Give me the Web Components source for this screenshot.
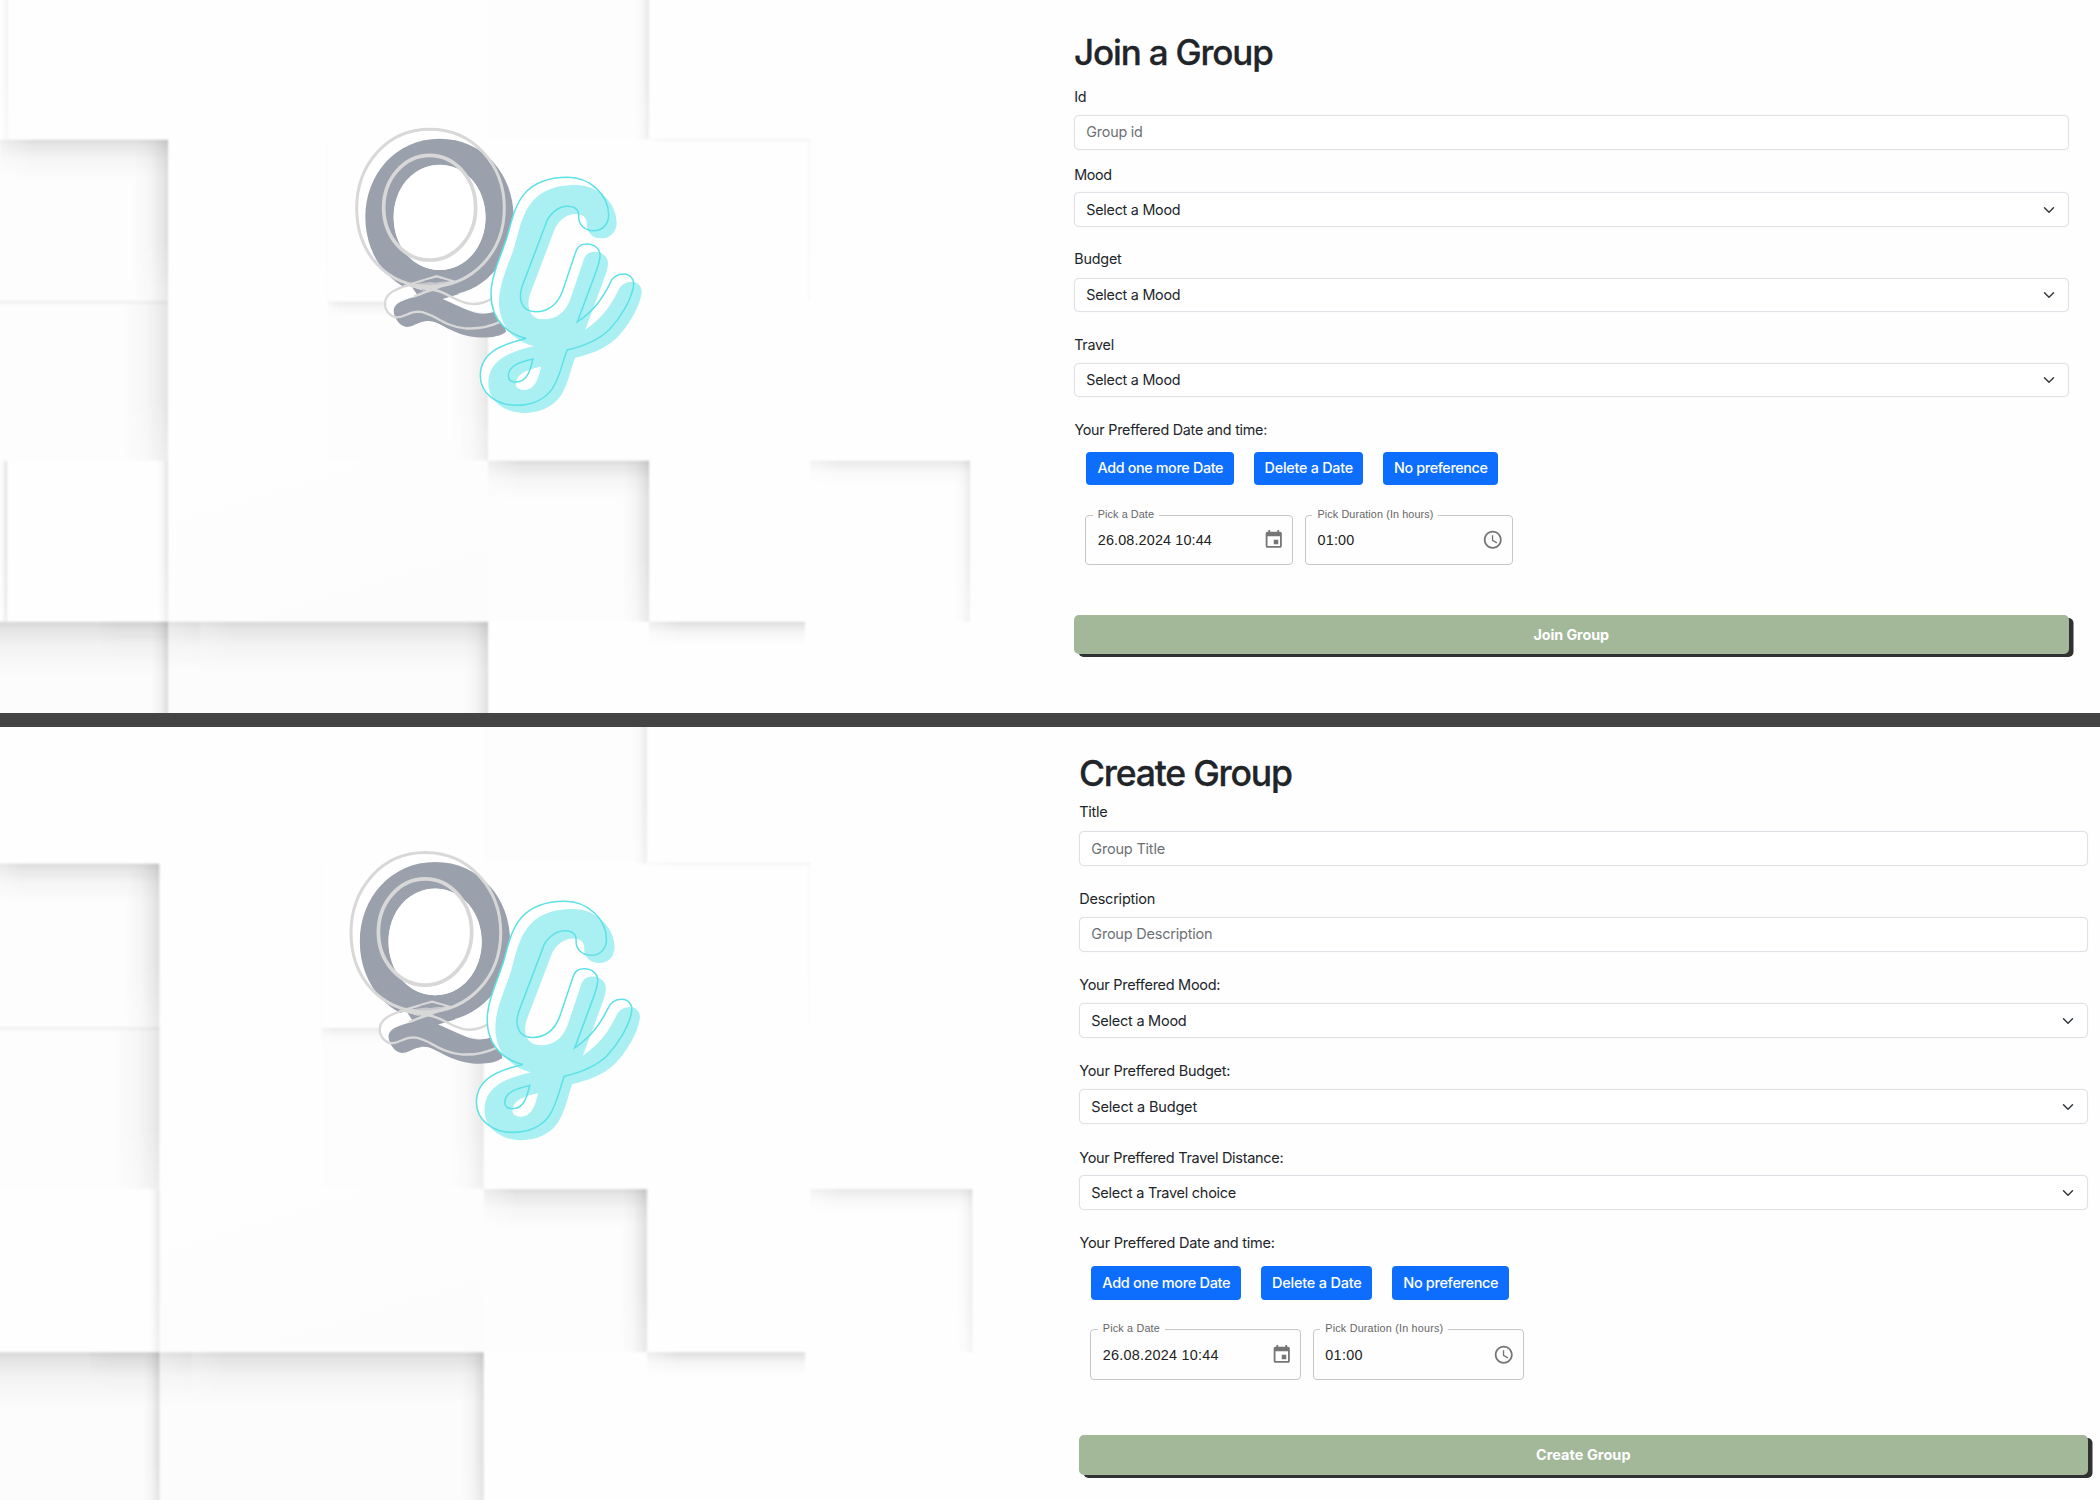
<!DOCTYPE html>
<html lang="en">
<head>
<meta charset="utf-8">
<title>Groups</title>
<style>
html,body{margin:0;padding:0}
body{width:2100px;height:1500px;overflow:hidden;background:#444;display:flex;flex-direction:column;gap:14px;font-family:Inter,"Liberation Sans",sans-serif;color:#212529}
</style>
</head>
<body>
<group-panel style="--h:713px;--bx:0px;--by:0px;--k:1;--lx:330px;--ly:110px;--left:1074px;--w:994.5px;--fs:14.3px;--hs:35px;--top:31px">
  <fit-text slot="title" track="198">Join a Group</fit-text>
  <form-field style="margin-top:14px;--g:8px;--c:34.5px" label="Id" lw="11.5" text="Group id" tw="55.7" hint></form-field>
  <form-field style="margin-top:15.5px;--g:7px;--c:35px" label="Mood" lw="36.7" text="Select a Mood" tw="93.3" pick></form-field>
  <form-field style="margin-top:22.4px;--g:8.6px;--c:34.5px" label="Budget" lw="46.7" text="Select a Mood" tw="93.3" pick></form-field>
  <form-field style="margin-top:22.6px;--g:7.9px;--c:34px" label="Travel" lw="39" text="Select a Mood" tw="93.3" pick></form-field>
  <date-section style="margin-top:23px;--g:12px;--bh:33px;--b1:148px;--b2:109px;--b3:115px;--fg:30.5px;--pw:208px;--ph:49.4px;--pg:11.7px" lw="192" w1="125" w2="87.7" w3="92.7" w4="55.5" w5="115.3" w6="113.5" w7="36.3"></date-section>
  <submit-button style="margin-top:50.1px;height:39.5px"><fit-text track="75">Join Group</fit-text></submit-button>
</group-panel>
<group-panel style="--h:773px;--bx:-11px;--by:-5px;--k:1.0137;--lx:324px;--ly:106px;--left:1079px;--w:1008.5px;--fs:14.5px;--hs:35.6px;--top:25.7px">
  <fit-text slot="title" track="212">Create Group</fit-text>
  <form-field style="margin-top:7.6px;--g:9px;--c:35px" label="Title" lw="27.7" text="Group Title" tw="73" hint></form-field>
  <form-field style="margin-top:22.7px;--g:8px;--c:35px" label="Description" lw="75.3" text="Group Description" tw="120.3" hint></form-field>
  <form-field style="margin-top:22.7px;--g:8.8px;--c:35px" label="Your Preffered Mood:" lw="140.3" text="Select a Mood" tw="94.5" pick></form-field>
  <form-field style="margin-top:22.5px;--g:8.2px;--c:35px" label="Your Preffered Budget:" lw="150.3" text="Select a Budget" tw="105" pick></form-field>
  <form-field style="margin-top:23.6px;--g:7.5px;--c:35px" label="Your Preffered Travel Distance:" lw="203.5" text="Select a Travel choice" tw="144" pick></form-field>
  <date-section style="margin-top:23px;--g:13px;--bh:33.4px;--b1:150px;--b2:111px;--b3:117px;--fg:29.5px;--pw:211px;--ph:51px;--pg:11.5px" lw="194.5" w1="127.3" w2="89" w3="94.3" w4="56.5" w5="117.3" w6="115.3" w7="36.8"></date-section>
  <submit-button style="margin-top:54.6px;height:40px"><fit-text track="94">Create Group</fit-text></submit-button>
</group-panel>

<script>
const make=(name,html,setup)=>customElements.define(name,class extends HTMLElement{
  connectedCallback(){
    if(this.shadowRoot)return;
    const root=this.attachShadow({mode:'open'});
    root.innerHTML=typeof html==='function'?html(this):html;
    if(setup)setup(this,root);
  }
});

/* Soft shadows between the raised tiles of the backdrop. */
const T=(x,y,w,h,o,c='t')=>`<rect x="${x}" y="${y}" width="${w}" height="${h}" fill="url(#${c})" opacity="${o}" mask="url(#m${c})"/>`;
make('tile-backdrop',()=>`<style>:host{display:block;position:absolute;inset:0;overflow:hidden;z-index:-1}
svg{display:block;transform-origin:0 0;transform:translate(var(--bx),var(--by)) scale(var(--k))}</style>
<svg width="1060" height="780" viewBox="0 0 1060 780"><defs>
<linearGradient id="t" x2="0" y2="1"><stop offset="0" stop-opacity=".15"/><stop offset=".12" stop-opacity=".1"/><stop offset=".45" stop-opacity=".035"/><stop offset="1" stop-opacity="0"/></linearGradient>
<linearGradient id="r" x1="1" x2="0"><stop offset="0" stop-opacity=".15"/><stop offset=".12" stop-opacity=".1"/><stop offset=".45" stop-opacity=".035"/><stop offset="1" stop-opacity="0"/></linearGradient>
<linearGradient id="ft"><stop offset="0" stop-color="#444"/><stop offset=".25" stop-color="#fff"/></linearGradient>
<linearGradient id="fr" x2="0" y2="1"><stop offset=".6" stop-color="#fff"/><stop offset="1" stop-color="#999"/></linearGradient>
<linearGradient id="p" x2=".6" y2="1" ><stop offset="0" stop-opacity="0"/><stop offset="1" stop-opacity=".007"/></linearGradient>
<mask id="mt" maskContentUnits="objectBoundingBox"><rect x="-.1" y="-.2" width="1.2" height="1.4" fill="url(#ft)"/></mask>
<mask id="mr" maskContentUnits="objectBoundingBox"><rect x="-.2" y="-.1" width="1.4" height="1.2" fill="url(#fr)"/></mask>
<filter id="s" x="-2%" y="-2%" width="104%" height="104%"><feGaussianBlur stdDeviation=".8"/></filter></defs>
<rect x="0" y="139" width="168" height="322" opacity=".004"/><rect x="168" y="460" width="320" height="161" fill="url(#p)"/><rect x="328" y="301" width="160" height="159" opacity=".005"/><rect x="488" y="460" width="161" height="161" opacity=".005"/><rect x="488" width="161" height="139" opacity=".005"/><rect x="0" y="621" width="488" height="160" opacity=".006"/>
<g filter="url(#s)" transform="translate(0 .8)">
${T(0,-20,8,159,.45,'r')}${T(0,460,7,161,1,'r')}
${T(0,139,168,44,.95)}${T(130,139,38,162,.95,'r')}
${T(-40,300,208,8,.5)}${T(118,301,50,159,.75,'r')}
${T(156,460,12,161,.85,'r')}
${T(-40,621,208,56,1)}${T(168,621,320,52,1)}${T(100,621,100,52,.25)}${T(150,621,18,170,1,'r')}${T(462,621,26,170,.9,'r')}
${T(325,139,3,162,.2,'r')}${T(328,301,60,17,.6)}${T(450,301,38,159,.65,'r')}
${T(488,460,161,42,.95)}${T(620,460,29,161,.95,'r')}
${T(634,-20,15,159,.7,'r')}
${T(649,138,161,5,.5)}${T(806,139,4,162,.35,'r')}
${T(649,621,156,24,1)}
${T(810,460,160,26,.7)}${T(952,460,18,161,.55,'r')}
</g></svg>`);

/* Offset fill plus outline: two overlapping monogram shapes. */
make('brand-mark',`<style>:host{display:block;position:absolute;left:var(--lx);top:var(--ly);z-index:0}svg{display:block;overflow:visible;transform-origin:0 0;transform:scale(var(--k))}</style>
<svg width="330" height="320" viewBox="0 0 990 960" fill="none"><defs>
<path id="g" d="M588 685C545 675 483 640 483 552C483 500 510 445 530 385C553 310 560 202 714 202C780 202 836 255 836 315C836 345 815 362 790 362C765 362 745 345 746 318C747 300 735 289 712 289C680 289 655 318 648 340L576 530C565 565 572 605 617 605C665 605 685 575 697 545L735 432C740 412 752 402 767 402C795 401 812 418 810 440C808 460 803 470 798 485L742 636C795 600 820 560 840 520C848 500 865 492 882 492C900 492 913 508 911 525C905 570 870 625 837 660C800 695 755 710 711 720C695 765 690 800 667 836C645 868 605 886 558 886C500 886 451 850 451 797C451 720 530 700 588 685ZM609 747C575 755 535 765 535 797C535 812 548 816 558 816C592 816 601 780 609 747Z"/></defs>
<path d="M299 58C430 58 523 165 523 295C523 425 430 528 299 530C165 528 80 425 80 295C80 165 170 58 299 58Z" fill="#fff"/>
<path fill="#9aa1ac" fill-rule="evenodd" d="M329 86C460 86 551 192 551 322C551 452 460 558 329 558C198 558 106 452 106 322C106 192 198 86 329 86ZM329 165C248 165 191 235 191 322C191 409 248 480 329 480C410 480 466 409 466 322C466 235 410 165 329 165Z"/>
<ellipse cx="329" cy="322" rx="138" ry="158" fill="#fff"/>
<path fill="#fff" d="M165 582C165 550 210 538 245 525L300 550C350 550 380 572 410 580C455 588 485 565 515 542L515 612C450 612 400 600 340 567L250 560L195 590L193 622Q168 610 165 582Z"/>
<path fill="#9aa1ac" d="M245 530L320 555L390 551C345 560 310 553 262 555Z"/>
<path fill="#9aa1ac" d="M191 604C191 570 240 568 310 543L390 551L338 567C390 590 430 611 455 611C480 611 500 603 515 599L528 666C505 682 475 684 440 682C360 675 325 625 285 634C255 640 250 651 230 651C208 650 191 620 191 604Z"/>
<g stroke="#d8d8d8" stroke-width="9"><path d="M299 58C430 58 523 165 523 295C523 425 430 528 299 530C165 528 80 425 80 295C80 165 170 58 299 58Z"/><ellipse cx="299" cy="293" rx="138" ry="157" stroke-width="11"/>
<path stroke-width="7" d="M515 542C485 575 440 590 405 578C370 568 345 545 312 540C290 535 260 535 233 525L320 499L370 514C335 528 285 545 252 560M235 524C200 537 165 548 165 582C165 605 185 622 200 622C225 622 235 605 265 605C310 607 340 650 405 655C445 658 480 650 512 635"/></g>
<path d="M250 523L320 514L375 515L310 543L250 560L290 543Z" fill="#d8d8d8" opacity=".7"/>
<path d="M320 503L355 512L315 518L280 513Z" fill="#9aa1ac"/>
<use href="#g" fill="#fff"/>
<use href="#g" x="24" y="23" fill="#aaf0f2" fill-rule="evenodd"/>
<path d="M633 770C605 777 558 790 558 822C558 835 570 839 581 839C616 839 625 803 633 770Z" fill="#fff"/>
<use href="#g" stroke="#5ce1e6" stroke-width="4.5"/>
</svg>`);

make('group-panel',`<style>:host{display:block;position:relative;isolation:isolate;overflow:hidden;height:var(--h);flex:none;background:#fefefe}
section{box-sizing:border-box;margin-left:var(--left);width:var(--w);padding-top:var(--top);display:flex;flex-direction:column;font-size:var(--fs)}
h1{margin:0;font-size:var(--hs);line-height:42px;height:42px;font-weight:500;-webkit-text-stroke:.3px currentColor}</style><tile-backdrop></tile-backdrop><brand-mark></brand-mark>
<section><h1><slot name="title"></slot></h1><slot></slot></section>`);

/* Text whose tracking is set so that it runs across a given width. */
make('fit-text','<style>:host{display:inline-block;white-space:nowrap}</style><slot></slot>',el=>{
  requestAnimationFrame(()=>{const n=el.textContent.length,w=+el.getAttribute('track');
    const now=el.getBoundingClientRect().width;
    if(w&&now)el.style.letterSpacing=((w+.7-now)/n).toFixed(3)+'px';});
});

make('form-field',el=>`<style>:host{display:flex;flex-direction:column;gap:var(--g)}
label{line-height:20px;height:20px;white-space:nowrap;padding-left:.2px}
div{box-sizing:border-box;height:var(--c);border:1px solid #dee2e6;border-radius:5px;background:#fff;display:flex;align-items:center;justify-content:space-between;padding:0 13px 0 11.3px;line-height:20px;box-shadow:0 0 1px #dee2e6}
.hint{color:#6d7175}svg{display:block}</style>
<label><fit-text track="${el.getAttribute('lw')}">${el.getAttribute('label')}</fit-text></label>
<div class="${el.hasAttribute('hint')?'hint':''}"><fit-text track="${el.getAttribute('tw')}">${el.getAttribute('text')}</fit-text>${el.hasAttribute('pick')?'<svg width="12" height="12" viewBox="0 0 16 16" fill="none" stroke="#343a40" stroke-width="2" stroke-linecap="round" stroke-linejoin="round"><path d="m2 5 6 6 6-6"/></svg>':''}</div>`);

make('pick-button','<style>:host{display:flex;align-items:center;justify-content:center;box-sizing:border-box;height:var(--bh);background:#0d6efd;color:#fff;border-radius:4px;font-weight:500;line-height:20px}</style><slot></slot>');

make('outlined-picker',el=>`<style>:host{display:block;width:var(--pw)}
fieldset{box-sizing:border-box;margin:-6px 0 0;height:calc(var(--ph) + 6px);min-width:0;border:1.3px solid #c6c6c6;border-radius:4px;padding:0 8px 0 11.5px;font-family:"Liberation Sans",sans-serif;color:#222}
legend{margin-left:-5px;padding:0 5px;font-size:10.8px;line-height:10px;height:12px;color:#666;display:block}
div{display:flex;align-items:center;justify-content:space-between;height:calc(var(--ph) - 9px);margin-top:-1.5px;font-size:14.4px}
svg{display:block}</style>
<fieldset><legend><fit-text track="${el.getAttribute('lw')}">${el.getAttribute('label')}</fit-text></legend><div><fit-text track="${el.getAttribute('tw')}">${el.getAttribute('value')}</fit-text>
<svg width="21.5" height="21.5" viewBox="0 0 24 24" fill="#757575">${el.getAttribute('icon')==='clock'?'<path d="M11.99 2C6.47 2 2 6.48 2 12s4.47 10 9.99 10C17.52 22 22 17.52 22 12S17.52 2 11.99 2zM12 20c-4.42 0-8-3.58-8-8s3.58-8 8-8 8 3.58 8 8-3.58 8-8 8z"/><path d="M12.5 7H11v6l5.25 3.15.75-1.23-4.5-2.67z"/>':'<path d="M17 12h-5v5h5v-5zM16 1v2H8V1H6v2H5c-1.11 0-1.99.9-1.99 2L3 19c0 1.1.89 2 2 2h14c1.1 0 2-.9 2-2V5c0-1.1-.9-2-2-2h-1V1h-2zm3 18H5V8h14v11z"/>'}</svg></div></fieldset>`);

make('date-section',el=>{const a=n=>el.getAttribute(n);return `<style>:host{display:flex;flex-direction:column}
label{height:20px;line-height:20px;padding-left:.4px}.row{display:flex;gap:20px;margin:var(--g) 0 0 12.3px}.fields{display:flex;gap:var(--pg);margin:var(--fg) 0 0 11.3px}</style>
<label><fit-text track="${a('lw')}">Your Preffered Date and time:</fit-text></label>
<div class="row"><pick-button style="width:var(--b1)"><fit-text track="${a('w1')}">Add one more Date</fit-text></pick-button><pick-button style="width:var(--b2)"><fit-text track="${a('w2')}">Delete a Date</fit-text></pick-button><pick-button style="width:var(--b3)"><fit-text track="${a('w3')}">No preference</fit-text></pick-button></div>
<div class="fields"><outlined-picker label="Pick a Date" lw="${a('w4')}" value="26.08.2024 10:44" tw="${a('w6')}" icon="calendar"></outlined-picker><outlined-picker label="Pick Duration (In hours)" lw="${a('w5')}" value="01:00" tw="${a('w7')}" icon="clock"></outlined-picker></div>`;});

make('submit-button','<style>:host{display:flex;align-items:center;justify-content:center;box-sizing:border-box;background:#a3b899;color:#fff;font-weight:700;border-radius:5px;box-shadow:4.5px 3px 0 #303231;line-height:20px}</style><slot></slot>');
</script>
</body>
</html>
